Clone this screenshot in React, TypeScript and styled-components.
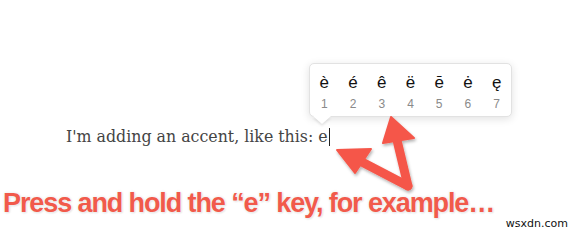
import React from "react";
import styled, { createGlobalStyle } from "styled-components";

const GlobalStyle = createGlobalStyle`
    html, body {
        margin: 0;
        padding: 0;
        background: #fff;
    }
`;

const Page = styled.div`
    position: relative;
    width: 577px;
    height: 235px;
    overflow: hidden;
    background: #fff;
    display: flex;
    flex-direction: column;
`;

const EditorLine = styled.div`
    margin-top: 127px;
    padding-left: 66px;
    font-family: "DejaVu Serif", Georgia, serif;
    font-size: 15.8px;
    line-height: 20px;
    color: #444;
    display: flex;
    align-items: center;
`;

const Caret = styled.span`
    display: inline-block;
    width: 1px;
    height: 18px;
    background: #222;
    margin-left: 1px;
`;

const Caption = styled.div`
    margin-top: 41px;
    padding-left: 3px;
    font-family: "Liberation Sans", Arial, sans-serif;
    font-weight: 700;
    font-size: 27px;
    letter-spacing: -1.1px;
    line-height: 30px;
    color: #f15a4b;
    white-space: nowrap;
    text-shadow: 0 0 2px #fff, 0 0 3px #ddd, 1px 1px 2px #e4e4e4;
`;

const Watermark = styled.div`
    align-self: flex-end;
    margin-right: 9px;
    margin-top: -1px;
    font-family: "DejaVu Sans", "Liberation Sans", sans-serif;
    font-size: 11px;
    color: #111;
`;

const Popover = styled.div`
    position: absolute;
    left: 309px;
    top: 63px;
    width: 203px;
    height: 54px;
    background: #fff;
    border: 1px solid #e2e2e2;
    border-radius: 5px;
    box-shadow: 0 2px 8px rgba(0, 0, 0, 0.12);
    display: grid;
    grid-template-columns: repeat(7, 1fr);
    box-sizing: border-box;

    &::after {
        content: "";
        position: absolute;
        left: 3px;
        bottom: -8px;
        width: 0;
        height: 0;
        border-left: 9px solid transparent;
        border-right: 9px solid transparent;
        border-top: 8px solid #fff;
        filter: drop-shadow(0 2px 1px rgba(0, 0, 0, 0.1));
    }
`;

const Choice = styled.div`
    display: flex;
    flex-direction: column;
    align-items: center;
    padding-top: 9px;
`;

const Glyph = styled.span`
    font-family: "Liberation Sans", Arial, sans-serif;
    font-size: 17px;
    line-height: 20px;
    color: #111;
`;

const KeyNumber = styled.span`
    margin-top: 4px;
    font-family: "Liberation Sans", Arial, sans-serif;
    font-size: 12px;
    line-height: 14px;
    color: #8a8a8a;
`;

const Arrows = styled.svg`
    position: absolute;
    left: 0;
    top: 0;
    pointer-events: none;
`;

const accents = ["è", "é", "ê", "ë", "ē", "ė", "ę"];

const App: React.FC = () => {
    return (
        <Page>
            <GlobalStyle />
            <EditorLine>
                I'm adding an accent, like this: e
                <Caret />
            </EditorLine>
            <Caption>Press and hold the “e” key, for example…</Caption>
            <Watermark>wsxdn.com</Watermark>
            <Popover>
                {accents.map((a, i) => (
                    <Choice key={a}>
                        <Glyph>{a}</Glyph>
                        <KeyNumber>{i + 1}</KeyNumber>
                    </Choice>
                ))}
            </Popover>
            <Arrows width="577" height="235" viewBox="0 0 577 235">
                <defs>
                    <filter id="sh" x="-20%" y="-20%" width="140%" height="140%">
                        <feDropShadow dx="1" dy="2" stdDeviation="1.5" floodColor="#000" floodOpacity="0.3" />
                    </filter>
                </defs>
                <g filter="url(#sh)" fill="#f5574a" stroke="#f5574a" strokeLinejoin="round" strokeLinecap="round">
                    <line x1="408" y1="186" x2="360" y2="161" strokeWidth="9" />
                    <polygon points="337,150 371,149 355,173" strokeWidth="2" />
                    <line x1="408" y1="186" x2="396" y2="136" strokeWidth="9" />
                    <polygon points="391,117 414,138 383,143" strokeWidth="2" />
                </g>
            </Arrows>
        </Page>
    );
};

export default App;
